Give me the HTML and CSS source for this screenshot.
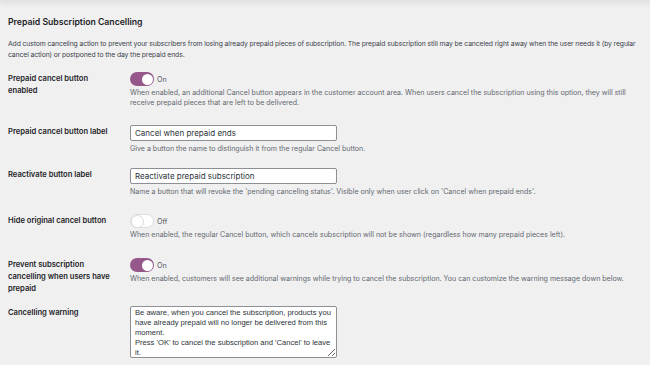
FILE: index.html
```html
<!DOCTYPE html>
<html lang="en">
<head>
<meta charset="utf-8">
<title>Prepaid Subscription Cancelling</title>
<link rel="stylesheet" href="styles.css">
</head>
<body>
<div class="topedge"></div>
<main class="page">
  <h2 class="title">Prepaid Subscription Cancelling</h2>
  <p class="intro">Add custom canceling action to prevent your subscribers from losing already prepaid pieces of subscription. The prepaid subscription still may be canceled right away when the user needs it (by regular cancel action) or postponed to the day the prepaid ends.</p>

  <div class="row row-1">
    <div class="label">Prepaid cancel button enabled</div>
    <div class="field">
      <div class="toggle-line"><span class="toggle on"><span class="knob"></span></span><span class="state">On</span></div>
      <p class="desc">When enabled, an additional Cancel button appears in the customer account area. When users cancel the subscription using this option, they will still receive prepaid pieces that are left to be delivered.</p>
    </div>
  </div>

  <div class="row row-2">
    <div class="label">Prepaid cancel button label</div>
    <div class="field">
      <input class="text" type="text" value="Cancel when prepaid ends">
      <p class="desc">Give a button the name to distinguish it from the regular Cancel button.</p>
    </div>
  </div>

  <div class="row row-3">
    <div class="label">Reactivate button label</div>
    <div class="field">
      <input class="text" type="text" value="Reactivate prepaid subscription">
      <p class="desc">Name a button that will revoke the 'pending canceling status'. Visible only when user click on 'Cancel when prepaid ends'.</p>
    </div>
  </div>

  <div class="row row-4">
    <div class="label">Hide original cancel button</div>
    <div class="field">
      <div class="toggle-line"><span class="toggle off"><span class="knob"></span></span><span class="state">Off</span></div>
      <p class="desc">When enabled, the regular Cancel button, which cancels subscription will not be shown (regardless how many prepaid pieces left).</p>
    </div>
  </div>

  <div class="row row-5">
    <div class="label">Prevent subscription cancelling when users have prepaid</div>
    <div class="field">
      <div class="toggle-line"><span class="toggle on"><span class="knob"></span></span><span class="state">On</span></div>
      <p class="desc">When enabled, customers will see additional warnings while trying to cancel the subscription. You can customize the warning message down below.</p>
    </div>
  </div>

  <div class="row row-6">
    <div class="label">Cancelling warning</div>
    <div class="field">
      <textarea class="area">Be aware, when you cancel the subscription, products you have already prepaid will no longer be delivered from this moment.
Press 'OK' to cancel the subscription and 'Cancel' to leave it.</textarea>
    </div>
  </div>
</main>
</body>
</html>
```

FILE: styles.css
```css
html, body {
  margin: 0;
  padding: 0;
  background: #f0f0f1;
  width: 650px;
  height: 365px;
  overflow: hidden;
}

body {
  font-family: "Inter", "Liberation Sans", sans-serif;
  color: #1d2327;
}

.topedge {
  height: 0;
  box-shadow: 0 0 6px 2px rgba(0, 0, 0, 0.12);
}

.page {
  padding: 0 8px;
}

.title {
  margin: 0;
  padding-top: 16px;
  font-size: 8.7px;
  line-height: 13px;
  font-weight: 600;
  color: #1d2327;
}

.intro {
  margin: 9px 0 0;
  font-size: 6.8px;
  letter-spacing: -0.1px;
  line-height: 11px;
  color: #3c434a;
  width: 640px;
}

.row {
  display: flex;
  align-items: flex-start;
}

.label {
  width: 108px;
  margin-right: 14px;
  flex: none;
  font-size: 7.6px;
  line-height: 12px;
  font-weight: 600;
  color: #1d2327;
  padding-top: 1px;
}

.field {
  flex: 1;
  min-width: 0;
}

.desc {
  margin: 2px 0 0;
  font-size: 7.05px;
  line-height: 10px;
  color: #646970;
}

.row-1 { margin-top: 12px; }
.row-2 { margin-top: 17px; }
.row-3 { margin-top: 14px; }
.row-4 { margin-top: 17px; }
.row-5 { margin-top: 18px; }
.row-6 { margin-top: 11px; }

.row-2 .desc, .row-3 .desc { margin-top: 3px; }

.toggle-line {
  display: flex;
  align-items: center;
  height: 14px;
}

.toggle {
  position: relative;
  display: inline-block;
  width: 24px;
  height: 14px;
  border-radius: 7px;
  box-sizing: border-box;
  flex: none;
}

.toggle.on {
  background: #96588a;
}

.toggle.off {
  background: #ffffff;
  border: 1px solid #dcdcde;
}

.knob {
  position: absolute;
  top: 1.5px;
  width: 11px;
  height: 11px;
  border-radius: 50%;
  background: #ffffff;
}

.toggle.on .knob {
  right: 1.5px;
}

.toggle.off .knob {
  top: 0.5px;
  left: 0.5px;
  box-shadow: 0 0 0 1px #dcdcde;
}

.state {
  margin-left: 3px;
  font-size: 7.15px;
  color: #50575e;
}

.text {
  display: block;
  box-sizing: border-box;
  width: 207px;
  height: 16px;
  margin: 0;
  padding: 0 4px;
  border: 1px solid #8c8f94;
  border-radius: 2px;
  background: #ffffff;
  font-family: "Inter", "Liberation Sans", sans-serif;
  font-size: 8px;
  color: #2c3338;
}

.area {
  display: block;
  box-sizing: border-box;
  width: 207px;
  height: 52px;
  margin: 0;
  padding: 1px 3px 1px 4px;
  border: 1px solid #8c8f94;
  border-radius: 2px;
  background: #ffffff;
  font-family: "Liberation Sans", "Inter", sans-serif;
  font-size: 7.6px;
  line-height: 10px;
  color: #2c3338;
  overflow: hidden;
}
```
